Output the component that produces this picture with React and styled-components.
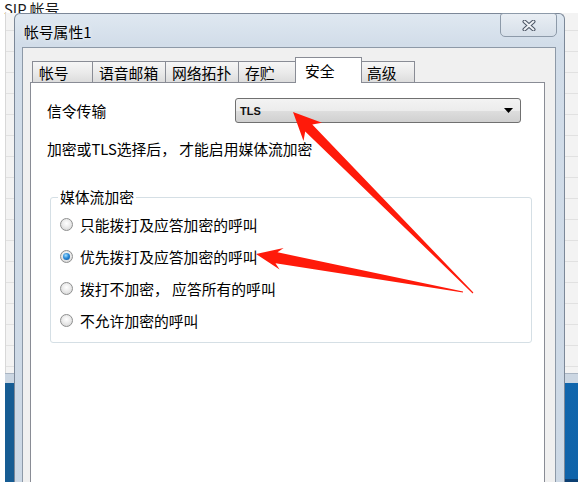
import React from 'react';
import styled, { createGlobalStyle } from 'styled-components';

const tabs = [
  { label: '帐号', width: 61 },
  { label: '语音邮箱', width: 74 },
  { label: '网络拓扑', width: 74 },
  { label: '存贮', width: 60 },
  { label: '安全', width: 67, active: true },
  { label: '高级', width: 55 },
];

const options = [
  { label: '只能拨打及应答加密的呼叫' },
  { label: '优先拨打及应答加密的呼叫', checked: true },
  { label: '拨打不加密， 应答所有的呼叫' },
  { label: '不允许加密的呼叫' },
];

// tapered "screenshot tool" arrow: wide head at tip, thin tail
const arrowPoints = (tip, tail, headLen, headHalf, neckHalf, tailHalf) => {
  const dx = tail[0] - tip[0];
  const dy = tail[1] - tip[1];
  const len = Math.hypot(dx, dy);
  const ux = dx / len, uy = dy / len;
  const px = uy, py = -ux;
  const at = (d, w) => [tip[0] + ux * d + px * w, tip[1] + uy * d + py * w];
  const pts = [
    tip,
    at(headLen, headHalf),
    at(headLen * 0.8, neckHalf),
    at(len, tailHalf),
    at(len, -tailHalf),
    at(headLen * 0.8, -neckHalf),
    at(headLen, -headHalf),
  ];
  return pts.map(p => p.map(v => v.toFixed(1)).join(',')).join(' ');
};

const App = () => {
  return (
    <Screen>
      <GlobalStyle />
      <Backdrop>
        <BackdropCaption>SIP 帐号</BackdropCaption>
        <BackdropList />
        <BackdropBand />
        <Taskbar>
          <TaskbarLeft />
          <TaskbarRight />
        </Taskbar>
      </Backdrop>

      <Dialog>
        <TitleBar>
          <Title>帐号属性1</Title>
          <CloseButton>
            <svg width="14" height="11" viewBox="0 0 14 11">
              <path d="M2.5 1.5 L11.5 9.5 M11.5 1.5 L2.5 9.5" stroke="#4a5463" strokeWidth="4" strokeLinecap="round" />
              <path d="M2.5 1.5 L11.5 9.5 M11.5 1.5 L2.5 9.5" stroke="#eef1f5" strokeWidth="2" strokeLinecap="round" />
            </svg>
          </CloseButton>
        </TitleBar>
        <Client>
          <TabStrip>
            {tabs.map(t => (
              <Tab key={t.label} $width={t.width} $active={t.active}>{t.label}</Tab>
            ))}
          </TabStrip>
          <Panel>
            <FieldRow>
              <FieldLabel>信令传输</FieldLabel>
              <Combo>
                <ComboText>TLS</ComboText>
                <svg width="9" height="5" viewBox="0 0 9 5">
                  <path d="M0 0 H9 L4.5 5 Z" fill="#000" />
                </svg>
              </Combo>
            </FieldRow>
            <Note>加密或TLS选择后， 才能启用媒体流加密</Note>
            <GroupBox>
              <Legend>媒体流加密</Legend>
              {options.map(o => (
                <RadioRow key={o.label}>
                  <RadioMark $checked={o.checked} />
                  <span>{o.label}</span>
                </RadioRow>
              ))}
            </GroupBox>
          </Panel>
        </Client>
      </Dialog>

      <Arrows width="580" height="490" viewBox="0 0 580 490">
        <polygon points={arrowPoints([293, 112], [473, 293], 28, 13, 5, 0.6)} fill="#ff1a0a" />
        <polygon points={arrowPoints([256, 254], [463, 292], 26, 11, 5.5, 0.6)} fill="#ff1a0a" />
      </Arrows>
    </Screen>
  );
};

export default App;

const GlobalStyle = createGlobalStyle`
  html, body {
    margin: 0;
    padding: 0;
    background: #fff;
  }
  body {
    font-family: "Noto Sans CJK SC", "Noto Sans", sans-serif;
    font-size: 14.8px;
    color: #000;
  }
`;

const Screen = styled.div`
  position: relative;
  width: 580px;
  height: 482px;
  overflow: hidden;
  background: #fff;
`;

const Backdrop = styled.div`
  position: absolute;
  left: 0;
  top: 0;
  width: 578px;
  height: 482px;
  display: flex;
  flex-direction: column;
`;
const BackdropCaption = styled.div`
  height: 13px;
  padding-left: 4px;
  line-height: 17px;
  white-space: nowrap;
  color: #1a1a1a;
`;
const BackdropList = styled.div`
  flex: 1;
  margin-left: 5px;
  border-left: 1px solid #d8d8d8;
  background-color: #f3f3f3;
  background-image: repeating-linear-gradient(to bottom, transparent 0 20px, #e1e1e1 20px 21px);
  background-position: 0 -3px;
`;
const BackdropBand = styled.div`
  height: 9px;
  margin-left: 5px;
  border-top: 1px solid #a9b5c3;
  background: #cbd6e2;
`;
const Taskbar = styled.div`
  height: 99px;
  margin-left: 5px;
  display: flex;
`;
const TaskbarLeft = styled.div`
  width: 290px;
  background: #165c93;
`;
const TaskbarRight = styled.div`
  flex: 1;
  background: linear-gradient(172deg, #2aa8da 0 20px, #1a86c6 23px, #1066ad 26px, #0f63a9 100%);
  border-bottom: 3px solid #0c3f72;
`;

const Dialog = styled.div`
  position: absolute;
  left: 14px;
  top: 13px;
  width: 551px;
  height: 490px;
  box-sizing: border-box;
  border: 1px solid #7c8898;
  border-bottom: none;
  border-radius: 6px 6px 0 0;
  background: linear-gradient(#dfe8f1 0, #d2dde9 30px, #ccd8e5 100%);
  padding: 0 7px 0 7px;
  display: flex;
  flex-direction: column;
  z-index: 1;
`;
const TitleBar = styled.div`
  height: 33px;
  display: flex;
  align-items: center;
  justify-content: space-between;
`;
const Title = styled.div`
  padding-left: 2px;
  padding-top: 2px;
  text-shadow: 0 0 5px rgba(255, 255, 255, 0.9);
`;
const CloseButton = styled.div`
  align-self: flex-start;
  margin-top: -1px;
  width: 57px;
  height: 24px;
  box-sizing: border-box;
  border: 1px solid #8d9aa9;
  border-radius: 3px 3px 5px 5px;
  background: linear-gradient(#e9eef4, #d6dfe9);
  display: flex;
  align-items: center;
  justify-content: center;
`;

const Client = styled.div`
  flex: 1;
  display: flex;
  flex-direction: column;
  border: 1px solid #8d99a7;
  border-bottom: none;
  margin-right: 1px;
  background: #f0f0f0;
  padding: 9px 10px 0 7px;
`;
const TabStrip = styled.div`
  display: flex;
  align-items: flex-end;
  padding-left: 2px;
  margin-bottom: -1px;
  position: relative;
  z-index: 1;
`;
const Tab = styled.div`
  box-sizing: border-box;
  width: ${p => p.$width}px;
  height: ${p => (p.$active ? 26 : 22)}px;
  margin: 0 ${p => (p.$active ? -2 : -1)}px 0 ${p => (p.$active ? -2 : 0)}px;
  padding: ${p => (p.$active ? '3px 0 0 9px' : '1px 0 0 6px')};
  line-height: 19px;
  white-space: nowrap;
  border: 1px solid #898c95;
  border-bottom: ${p => (p.$active ? 'none' : '1px solid #898c95')};
  background: ${p => (p.$active ? '#fff' : 'linear-gradient(#f6f6f6, #ebebeb 50%, #dcdcdc)')};
  position: relative;
  z-index: ${p => (p.$active ? 2 : 0)};
`;
const Panel = styled.div`
  flex: 1;
  background: #fff;
  border: 1px solid #898c95;
  padding: 15px 0 0 16px;
  display: flex;
  flex-direction: column;
  align-items: flex-start;
`;
const FieldRow = styled.div`
  display: flex;
  align-items: center;
  height: 25px;
`;
const FieldLabel = styled.div`
  width: 188px;
  line-height: 20px;
`;
const Combo = styled.div`
  width: 286px;
  height: 25px;
  box-sizing: border-box;
  border: 1px solid #707070;
  border-radius: 3px;
  background: linear-gradient(#f3f3f3 0, #ececec 50%, #dedede 50%, #d0d0d0 100%);
  display: flex;
  align-items: center;
  justify-content: space-between;
  padding: 0 7px 0 4px;
`;
const ComboText = styled.span`
  font-family: "Liberation Sans", Arial, sans-serif;
  font-weight: bold;
  font-size: 11px;
  color: #111;
`;
const Note = styled.div`
  margin-top: 16px;
  line-height: 20px;
  white-space: nowrap;
`;
const GroupBox = styled.fieldset`
  margin: 28px 0 0 3px;
  width: 482px;
  box-sizing: border-box;
  border: 1px solid #d5dfe5;
  border-radius: 3px;
  padding: 1px 0 6px 9px;
`;
const Legend = styled.legend`
  padding: 0 2px;
  margin-left: -2px;
  line-height: 20px;
`;
const RadioRow = styled.label`
  display: flex;
  align-items: center;
  gap: 7px;
  height: 32px;
  white-space: nowrap;
`;
const RadioMark = styled.span`
  width: 13px;
  height: 13px;
  box-sizing: border-box;
  border-radius: 50%;
  border: 1px solid #8e8f8f;
  background: radial-gradient(circle at 50% 40%, #ffffff 0, #eeeeee 40%, #cfcfcf 100%);
  display: flex;
  align-items: center;
  justify-content: center;

  &::after {
    content: '';
    width: 7px;
    height: 7px;
    border-radius: 50%;
    background: ${p => (p.$checked
      ? 'radial-gradient(circle at 40% 35%, #a6e0ff 0, #2b8bd8 45%, #0b4c94 100%)'
      : 'transparent')};
  }
`;

const Arrows = styled.svg`
  position: absolute;
  left: 0;
  top: 0;
  z-index: 5;
  pointer-events: none;
`;
